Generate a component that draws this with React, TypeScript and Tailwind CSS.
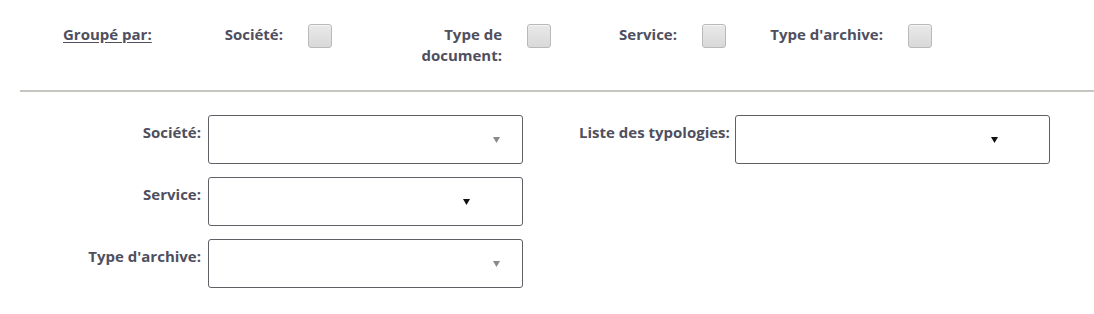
import type { ReactNode } from "react";

function Checkbox() {
  return (
    <span className="block h-[24px] w-[24px] shrink-0 rounded-[3px] border border-[#b9b9b9] bg-[linear-gradient(#e9e9e9,#d9d9d9)] shadow-[inset_0_1px_0_#f5f5f5]" />
  );
}

function Arrow({ dark }: { dark?: boolean }) {
  return (
    <svg width="7" height="6" viewBox="0 0 7 6" className={dark ? "fill-[#111]" : "fill-[#8a8a8a]"}>
      <polygon points="0,0 7,0 3.5,6" />
    </svg>
  );
}

function Select({ arrow }: { arrow: "gray" | "dark-mid" | "dark-right" }) {
  return (
    <div className="relative h-[49px] w-[315px] shrink-0 rounded-[3px] border border-[#5f5f66] bg-white">
      {arrow === "gray" && (
        <span className="absolute right-[22px] top-[21px] flex">
          <Arrow />
        </span>
      )}
      {arrow === "dark-mid" && (
        <span className="absolute right-[52px] top-[21px] flex">
          <Arrow dark />
        </span>
      )}
      {arrow === "dark-right" && (
        <span className="absolute right-[51px] top-[21px] flex">
          <Arrow dark />
        </span>
      )}
    </div>
  );
}

function Field({ label, width, children }: { label: string; width: string; children: ReactNode }) {
  return (
    <div className="flex items-start gap-[7px]">
      <div className={`${width} shrink-0 whitespace-nowrap pt-[7px] text-right`}>{label}</div>
      {children}
    </div>
  );
}

export default function App() {
  return (
    <div className="h-[314px] w-[1094px] bg-white font-['Open_Sans',sans-serif] text-[15px] font-bold leading-[21px] text-[#4f4f5e]">
      <div className="flex items-start pl-[63px] pt-[24px]">
        <div className="w-[88px] shrink-0 whitespace-nowrap underline underline-offset-2">Groupé par:</div>
        <div className="w-[132px] shrink-0 whitespace-nowrap text-right">Société:</div>
        <div className="ml-[25px]">
          <Checkbox />
        </div>
        <div className="flex w-[170px] shrink-0 justify-end">
          <div className="w-[90px] text-right">Type de document:</div>
        </div>
        <div className="ml-[25px]">
          <Checkbox />
        </div>
        <div className="w-[126px] shrink-0 whitespace-nowrap text-right">Service:</div>
        <div className="ml-[25px]">
          <Checkbox />
        </div>
        <div className="w-[157px] shrink-0 whitespace-nowrap text-right">Type d'archive:</div>
        <div className="ml-[25px]">
          <Checkbox />
        </div>
      </div>

      <div className="ml-[20px] mt-[24px] h-[2px] bg-[#c6c6c0]" />

      <div className="flex items-start pt-[23px]">
        <div className="flex flex-col gap-[13px]">
          <Field label="Société:" width="w-[201px]">
            <Select arrow="gray" />
          </Field>
          <Field label="Service:" width="w-[201px]">
            <Select arrow="dark-mid" />
          </Field>
          <Field label="Type d'archive:" width="w-[201px]">
            <Select arrow="gray" />
          </Field>
        </div>
        <div className="ml-[56px]">
          <Field label="Liste des typologies:" width="w-[149px]">
            <Select arrow="dark-right" />
          </Field>
        </div>
      </div>
    </div>
  );
}
